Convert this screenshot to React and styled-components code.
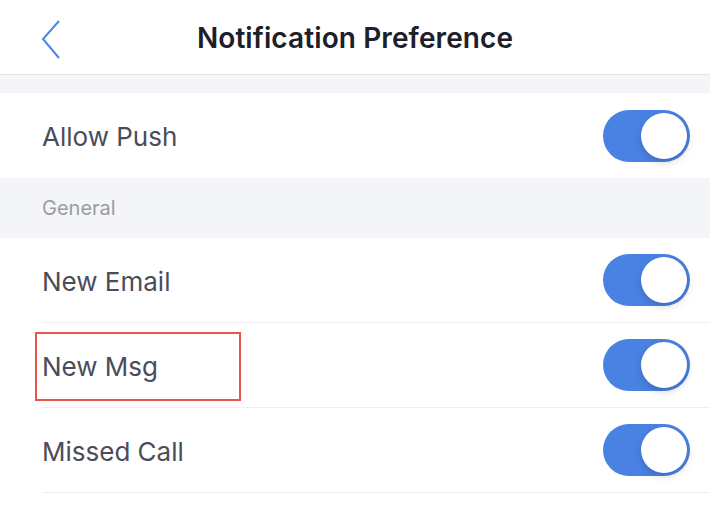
import React, { useState } from "react";
import styled, { createGlobalStyle } from "styled-components";

const GlobalStyle = createGlobalStyle`
  body {
    margin: 0;
    background: #ffffff;
    font-family: Inter, "Noto Sans", "Liberation Sans", sans-serif;
  }
`;

const Page = styled.div`
  width: 710px;
  min-height: 514px;
  background: #ffffff;
`;

const Header = styled.header`
  height: 74px;
  display: flex;
  align-items: center;
  justify-content: center;
  position: relative;
  border-bottom: 1px solid #e3e4e8;
`;

const BackButton = styled.button`
  position: absolute;
  left: 36px;
  top: 17px;
  width: 30px;
  height: 44px;
  padding: 0;
  border: none;
  background: none;
  display: flex;
  align-items: center;
  justify-content: center;
`;

const Title = styled.h1`
  margin: 2px 0 0 0;
  font-size: 28px;
  font-weight: 600;
  color: #1e2029;
  letter-spacing: 0.1px;
`;

const Spacer = styled.div`
  height: ${(p) => p.h}px;
  background: #f4f5f9;
`;

const SectionHead = styled.div`
  height: 60px;
  display: flex;
  align-items: center;
  padding-left: 42px;
  background: #f4f5f9;
  font-size: 20px;
  color: #9a9ca4;
`;

const Row = styled.div`
  height: ${(p) => (p.divider ? 84 : 85)}px;
  margin-left: 42px;
  padding-right: 20px;
  display: flex;
  align-items: center;
  justify-content: space-between;
  border-bottom: ${(p) => (p.divider ? "1px solid #efeff1" : "none")};
  background: #ffffff;
`;

const Label = styled.span`
  font-size: 26px;
  color: #4a4d59;
  position: relative;
  margin-top: 2px;
`;

const Highlight = styled.span`
  position: absolute;
  left: -7px;
  top: -19px;
  width: 202px;
  height: 65px;
  border: 2px solid #e8564b;
`;

const Track = styled.button`
  width: 87px;
  height: 52px;
  border-radius: 26px;
  border: none;
  padding: 0;
  background: ${(p) => (p.on ? "#4a82e4" : "#e5e6ea")};
  position: relative;
  cursor: pointer;
`;

const Knob = styled.span`
  position: absolute;
  top: 3px;
  left: ${(p) => (p.on ? "38px" : "3px")};
  width: 46px;
  height: 46px;
  border-radius: 50%;
  background: #ffffff;
  box-shadow: 0 3px 8px rgba(0, 0, 0, 0.18);
`;

const Toggle = ({ initial = true }) => {
  const [on, setOn] = useState(initial);
  return (
    <Track on={on ? 1 : 0} onClick={() => setOn(!on)}>
      <Knob on={on ? 1 : 0} />
    </Track>
  );
};

const general = [
  { id: "email", label: "New Email" },
  { id: "msg", label: "New Msg", marked: true },
  { id: "call", label: "Missed Call" },
];

export default function App() {
  return (
    <Page>
      <GlobalStyle />
      <Header>
        <BackButton aria-label="back">
          <svg width="20" height="40" viewBox="0 0 20 40">
            <path d="M18 2 L2 20 L18 39" fill="none" stroke="#4a86e8" strokeWidth="2" />
          </svg>
        </BackButton>
        <Title>Notification Preference</Title>
      </Header>
      <Spacer h={18} />
      <Row>
        <Label>Allow Push</Label>
        <Toggle />
      </Row>
      <SectionHead>General</SectionHead>
      {general.map((item) => (
        <Row key={item.id} divider>
          <Label>
            {item.label}
            {item.marked && <Highlight />}
          </Label>
          <Toggle />
        </Row>
      ))}
    </Page>
  );
}
